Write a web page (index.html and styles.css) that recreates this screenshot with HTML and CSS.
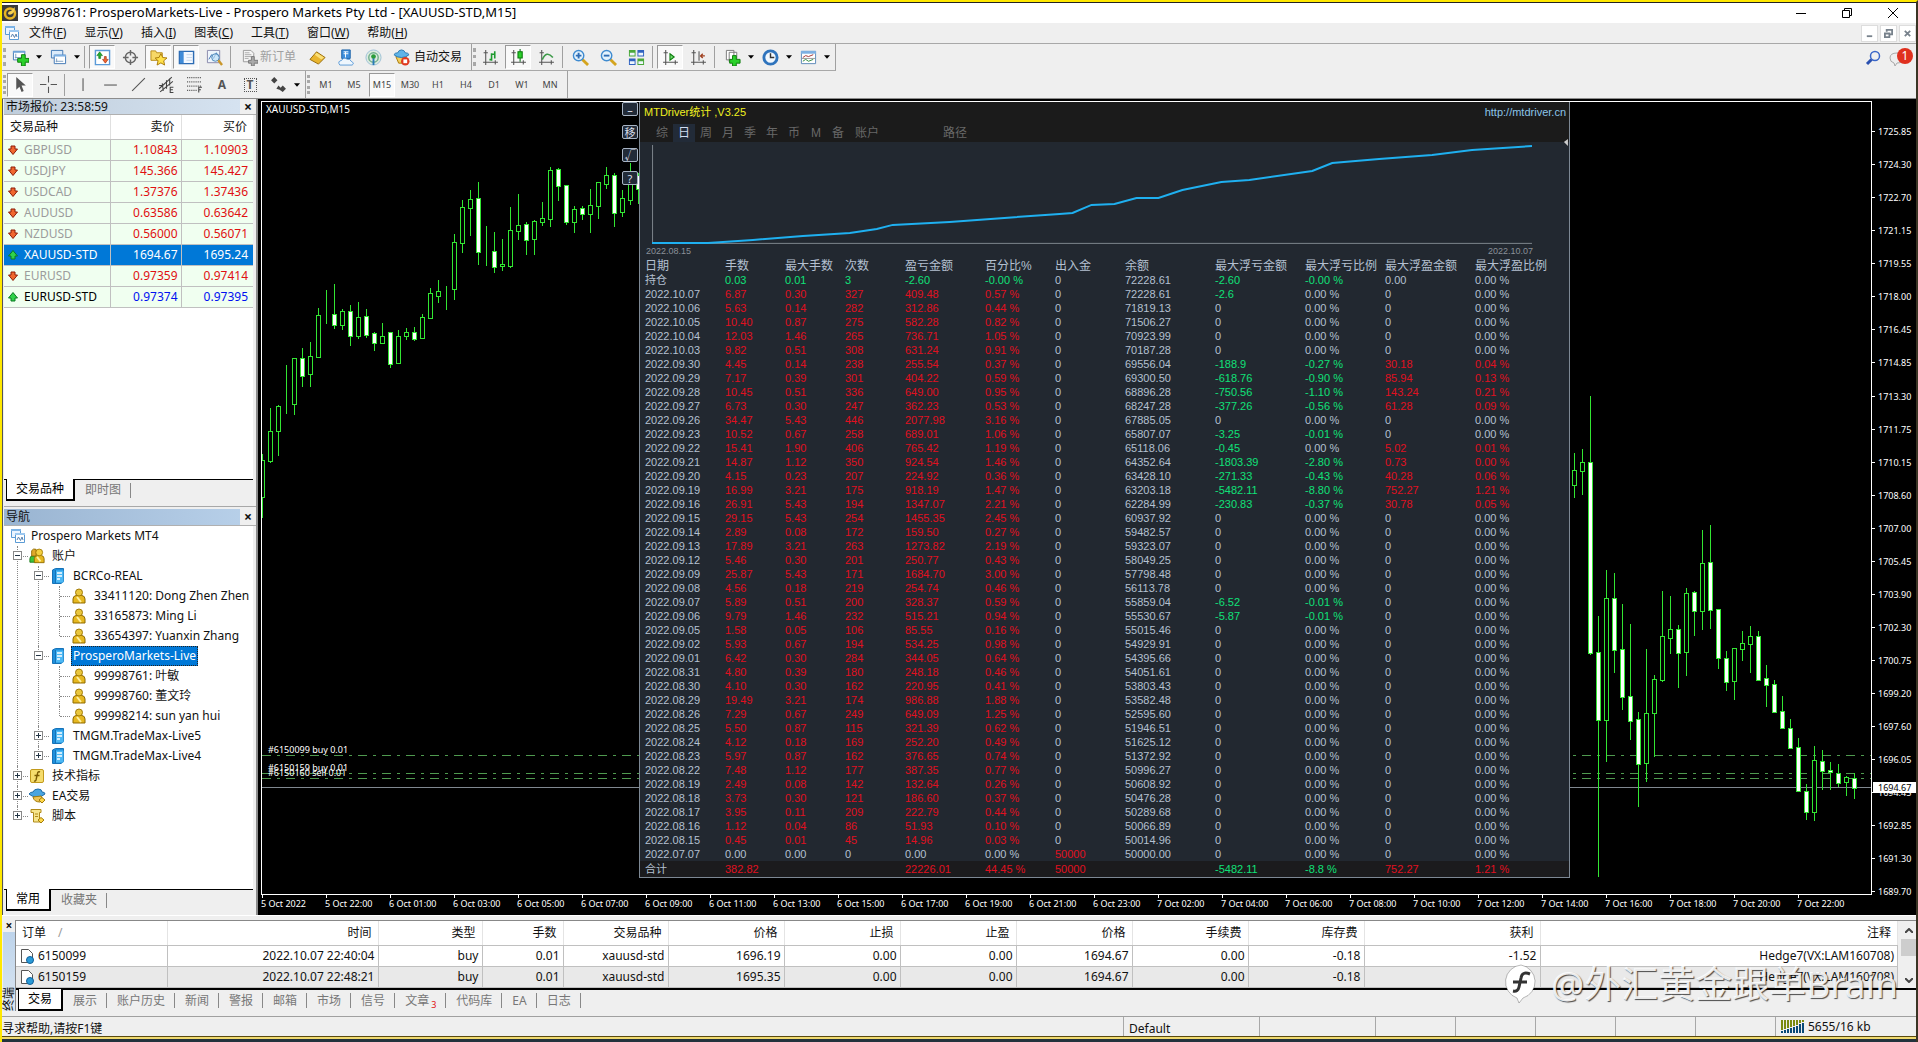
FILE: index.html
```html
<!DOCTYPE html>
<html lang="zh-CN">
  <head>
    <meta charset="UTF-8" />
    <meta name="viewport" content="width=device-width, initial-scale=1.0" />
    <title>99998761: ProsperoMarkets-Live</title>
    <link rel="stylesheet" href="styles.css" />
  </head>
  <body>
    <!-- shared icons -->
    <svg class="defs" width="0" height="0">
      <symbol id="i-down" viewBox="0 0 10 10"><path d="M3 1h4v3h2.500L5 9.500.5 4H3z" fill="#f0672f" stroke="#8d1c08" /></symbol>
      <symbol id="i-up" viewBox="0 0 10 10"><path d="M3 9h4V6h2.500L5 .5.5 6H3z" fill="#2fd24a" stroke="#0b7a22" /></symbol>
      <symbol id="i-win" viewBox="0 0 16 16">
        <path d="M1.500 1.500h9v8h-9z" fill="#eaf4ff" stroke="#5b9bd5" /><path d="M1 1h10v2H1z" fill="#7db4e6" />
        <path d="M5.500 5.500h9v9h-9z" fill="#fff" stroke="#5b9bd5" /><path d="M5 5h10v2H5z" fill="#9cc8f0" />
        <path d="M7 12l1.500-3 2 3.500L12 9l1 3" fill="none" stroke="#5b84b0" />
      </symbol>
      <symbol id="i-user" viewBox="0 0 16 16">
        <path d="M2 15V11q0-3 3-3.500h6q3 .5 3 3.500v4z" fill="#e6b820" stroke="#8f6a00" />
        <circle cx="8" cy="4.500" r="3.500" fill="#e9c63c" stroke="#a37c08" /><path d="M6 9l4 5" stroke="#fff0a0" stroke-width="2" />
      </symbol>
      <symbol id="i-users" viewBox="0 0 18 18">
        <path d="M1 16v-4q0-3 3-3h4v7z" fill="#3cc43c" stroke="#1c7a1c" />
        <path d="M3 3q2-3 5-1.500L8 9H3z" fill="#e0a92c" stroke="#8f6a00" />
        <path d="M6 16.500V12q0-3 3-3.500h5q3 .5 3 3.500v4.500z" fill="#e6b820" stroke="#8f6a00" />
        <circle cx="11.500" cy="5" r="3.800" fill="#f4d040" stroke="#a37c08" /><path d="M9 10l4 5" stroke="#fff0a0" stroke-width="2" />
      </symbol>
      <symbol id="i-server" viewBox="0 0 16 16">
        <path d="M2.500 2l3-1.500h8v13l-2.500 2h-8.500z" fill="#1f8fdc" stroke="#1673b8" /><path d="M5.500 2.500h8v12h-8z" fill="#4cb8f4" />
        <path d="M7 5h5M7 8h5M7 11h3" stroke="#fff" stroke-width="1.500" /><path d="M5.500 2v13" stroke="#1673b8" />
      </symbol>
      <symbol id="i-func" viewBox="0 0 16 16">
        <rect x="1.500" y="1.500" width="13" height="13" rx="1.500" fill="#f5dc6c" stroke="#c29a1c" />
        <path d="M11 4q-2-1-2.500 1.500L7 12q-.5 1.500-2 1M5.500 7.500h5" fill="none" stroke="#7a5a00" stroke-width="1.400" />
      </symbol>
      <symbol id="i-ea" viewBox="0 0 18 16">
        <path d="M1 6q1-2 4-2 1-3 5-3t4 3q3 0 3 2-3 3-8 3T1 6z" fill="#4aa5e0" stroke="#1f6ca8" />
        <path d="M5 9q1 5 7 5l3-2-2-4z" fill="#eec456" stroke="#a37c08" /><path d="M11 12l3-2.500 3 2.500-3 3z" fill="#ffd84a" stroke="#a37c08" />
      </symbol>
      <symbol id="i-script" viewBox="0 0 16 16">
        <path d="M2 1.500h10v3h-1.500V12H13v2H4.500V4.500H2z" fill="#f6e58c" stroke="#b08a1a" /><path d="M6 6h3M6 8.500h3" stroke="#b08a1a" />
        <path d="M9 12l3-2.500 3 2.500-3 3z" fill="#ffd84a" stroke="#a37c08" />
      </symbol>
      <symbol id="i-order" viewBox="0 0 16 16">
        <path d="M2.500 1.500h7l4 4v9h-11z" fill="#fff" stroke="#555" /><circle cx="11" cy="12" r="3.500" fill="#2a9ad6" stroke="#12609a" />
      </symbol>
      <symbol id="i-caret" viewBox="0 0 7 4"><path d="M0 0h7L3.500 4z" fill="#000" /></symbol>
      <symbol id="i-axes" viewBox="0 0 16 16"><path d="M3.500 1v14M1 12.500h14M1.500 3.500h4M12.500 10.500v4" fill="none" stroke="#555" /></symbol>
    </svg>

    <header class="titlebar">
      <svg class="logo" viewBox="0 0 16 16"><path d="M0 0h16v16H0z" fill="#3b3b3b" /><circle cx="8" cy="8.500" r="5" fill="none" stroke="#e8b523" stroke-width="2.500" /><path d="M6 9q0-3 3-3l4-4-1 5q-3 4-6 2z" fill="#f6d050" /></svg>
      <h1>99998761: ProsperoMarkets-Live - Prospero Markets Pty Ltd - [XAUUSD-STD,M15]</h1>
      <div class="win-btns">
        <button aria-label="最小化"><svg viewBox="0 0 10 10"><path d="M0 5.500h10" /></svg></button>
        <button aria-label="还原"><svg viewBox="0 0 10 10"><path d="M.5 2.500h7v7h-7zM2.500 2.500v-2h7v7h-2" /></svg></button>
        <button aria-label="关闭"><svg viewBox="0 0 10 10"><path d="M0 0l10 10M10 0L0 10" /></svg></button>
      </div>
    </header>

    <nav class="menubar">
      <svg class="ico"><use href="#i-win" /></svg>
      <button>文件(<u>F</u>)</button>
      <button>显示(<u>V</u>)</button>
      <button>插入(<u>I</u>)</button>
      <button>图表(<u>C</u>)</button>
      <button>工具(<u>T</u>)</button>
      <button>窗口(<u>W</u>)</button>
      <button>帮助(<u>H</u>)</button>
      <div class="mdi-btns">
        <button aria-label="最小化图表"><svg viewBox="0 0 10 10"><path d="M2 8h6" /></svg></button>
        <button aria-label="还原图表"><svg viewBox="0 0 10 10"><path d="M1 5h5v4H1zM3 3V1h6v5H7" /></svg></button>
        <button aria-label="关闭图表"><svg viewBox="0 0 10 10"><path d="M2 2l6 6M8 2L2 8" /></svg></button>
      </div>
    </nav>

    <div class="toolrow">
      <div class="toolbar">
        <button aria-label="新图表"><svg viewBox="0 0 18 18"><path d="M1.500 2.500h12v9h-12z" fill="#fff" stroke="#3f76b5" /><path d="M1 2h13v2H1z" fill="#6ea3d8" /><path d="M4 5v5M3 9h8" stroke="#7a9cc0" /><path d="M10 6h4v4h4v4h-4v4h-4v-4H6v-4h4z" fill="#2bd12b" stroke="#0c7a0c" /></svg></button>
        <button class="drop" aria-label="新图表列表"><svg><use href="#i-caret" /></svg></button>
        <button aria-label="模板"><svg viewBox="0 0 18 18"><path d="M1.500 1.500h12v8h-12z" fill="#dcebfa" stroke="#3f76b5" /><path d="M4.500 6.500h12v9h-12z" fill="#fff" stroke="#3f76b5" /><path d="M4 6h13v2H4z" fill="#7db0e2" /><path d="M7 10v4M6 13h8" stroke="#7a9cc0" /></svg></button>
        <button class="drop" aria-label="模板列表"><svg><use href="#i-caret" /></svg></button>
        <i class="sep"></i>
        <button class="on" aria-label="市场报价"><svg viewBox="0 0 18 18"><path d="M1.500 1.500h15v15h-15z" fill="#fff" stroke="#5a9ad8" stroke-width="1.500" /><path d="M6 3l3 4H7v3H5V7H3z" fill="#1fae2e" stroke="#0b6a18" stroke-width=".6" /><path d="M11 8h2v3h2l-3 4-3-4h2z" fill="#f0672f" stroke="#8d1c08" stroke-width=".6" /></svg></button>
        <button aria-label="数据窗口"><svg viewBox="0 0 18 18"><circle cx="9" cy="9" r="5.500" fill="none" stroke="#666" stroke-width="1.500" /><path d="M9 1v6M9 11v6M1 9h6M11 9h6" stroke="#666" stroke-width="1.500" /></svg></button>
        <button class="on" aria-label="导航"><svg viewBox="0 0 18 18"><path d="M1 2h5l1 2h6v8H1z" fill="#f7d868" stroke="#b88a16" /><path d="M11.500 5l2 4 4.500.5-3.500 3 1 4.500-4-2.300L7.500 17l1-4.500-3-3 4-.5z" fill="#ffe14a" stroke="#a87808" /></svg></button>
        <button class="on" aria-label="终端"><svg viewBox="0 0 18 18"><path d="M1.500 2.500h15v13h-15z" fill="#f3f8ff" stroke="#2d6cb4" stroke-width="1.500" /><path d="M2 3h4v12H2z" fill="#3f8bd8" /><path d="M9 6h6M9 9h6M9 12h6" stroke="#c8d8ea" /></svg></button>
        <button aria-label="策略测试"><svg viewBox="0 0 18 18"><path d="M1.500 1.500h13v13h-13z" fill="#eef5fc" stroke="#88a" /><path d="M3 11l3-5 2 4 3-6 2 4" fill="none" stroke="#3f76b5" /><circle cx="10" cy="9" r="4" fill="#bfe0f8aa" stroke="#4a86b8" /><path d="M13 12l4 5" stroke="#c9962a" stroke-width="2.500" /></svg></button>
        <i class="sep"></i>
        <button class="wide" disabled><svg viewBox="0 0 18 18"><path d="M2.500 1.500h8l3 3v9h-11z" fill="#f4f4f4" stroke="#999" /><path d="M4 4h5M4 6h7M4 8h7M4 10h4" stroke="#aaa" /><path d="M11 8h3v4h4v3h-4v3h-3v-3H8v-3h3z" fill="#aaa" stroke="#777" /></svg>新订单</button>
        <button aria-label="编辑器"><svg viewBox="0 0 18 18"><path d="M1 11L8 3l9 6-7 7z" fill="#e9b52e" stroke="#956a0a" /><path d="M8 4l8 5-3 2-7-5z" fill="#fbe078" /></svg></button>
        <button aria-label="市场"><svg viewBox="0 0 18 18"><path d="M5 1h9v9H5z" fill="#3f8fdc" stroke="#1c62a8" /><path d="M7 3h5M7 5h5M9 3v6" stroke="#fff" /><path d="M3 17q-3-4 2-5 2-4 6-1 3-1 4 2 4 2 1 4z" fill="#eef6fd" stroke="#5a9ad8" /></svg></button>
        <button aria-label="信号"><svg viewBox="0 0 18 18"><circle cx="9" cy="9" r="8" fill="#dceadf" stroke="#9cc0d8" /><circle cx="9" cy="9" r="5" fill="none" stroke="#6fae8a" stroke-width="1.500" /><circle cx="9" cy="8" r="2.500" fill="#2a9c3a" /><path d="M9 10v7" stroke="#2a7ab8" stroke-width="2" /></svg></button>
        <button class="wide auto"><svg viewBox="0 0 18 18"><path d="M3 8h11l-2 7H6z" fill="#f3cf5e" stroke="#a87808" /><path d="M1 6q1-2 4-2 1-3 4-3t4 3q3 0 4 2-3 3-8 3T1 6z" fill="#5fb4e8" stroke="#2a78b0" /><circle cx="13" cy="13" r="4.500" fill="#e03a20" /><path d="M11 11h4v4h-4z" fill="#fff" /></svg>自动交易</button>
      </div>
      <div class="toolbar">
        <button aria-label="柱状图"><svg viewBox="0 0 16 16"><use href="#i-axes" /><path d="M9 4v7M12 2v7M7 10h2M9 5h3" stroke="#1e9a2e" stroke-width="1.500" /></svg></button>
        <button class="on" aria-label="阴阳烛"><svg viewBox="0 0 16 16"><use href="#i-axes" /><path d="M9.500 0v12" stroke="#0b6a18" /><path d="M7.500 2.500h4v6h-4z" fill="#2bd12b" stroke="#0c7a0c" /></svg></button>
        <button aria-label="折线图"><svg viewBox="0 0 16 16"><use href="#i-axes" /><path d="M4 10q4-9 10-2" fill="none" stroke="#3c9a48" stroke-width="1.500" /></svg></button>
        <i class="sep"></i>
        <button aria-label="放大"><svg viewBox="0 0 18 18"><path d="M11 11l6 6" stroke="#d4a41e" stroke-width="3" /><circle cx="7" cy="7" r="5.500" fill="#e4f3fd" stroke="#3f8bd0" stroke-width="1.500" /><path d="M4 7h6M7 4v6" stroke="#2d6cb4" stroke-width="2" /></svg></button>
        <button aria-label="缩小"><svg viewBox="0 0 18 18"><path d="M11 11l6 6" stroke="#d4a41e" stroke-width="3" /><circle cx="7" cy="7" r="5.500" fill="#e4f3fd" stroke="#3f8bd0" stroke-width="1.500" /><path d="M4 7h6" stroke="#2d6cb4" stroke-width="2" /></svg></button>
        <button aria-label="平铺"><svg viewBox="0 0 18 18"><path d="M1 1h7v7H1zM10 10h7v7h-7z" fill="#4aa83a" /><path d="M10 1h7v7h-7zM1 10h7v7H1z" fill="#2f62c0" /><path d="M2 4h5v3H2zM11 4h5v3h-5zM2 13h5v3H2zM11 13h5v3h-5z" fill="#eef6fd" /></svg></button>
        <i class="sep"></i>
        <button class="on" aria-label="自动滚动"><svg viewBox="0 0 16 16"><use href="#i-axes" /><path d="M7.500 4.500l4 3-4 3z" fill="#6fdc6f" stroke="#0c7a0c" /></svg></button>
        <button aria-label="图表平移"><svg viewBox="0 0 16 16"><use href="#i-axes" /><path d="M8.500 2v9" stroke="#555" /><path d="M14 6.500H10M12 4.500l-2 2 2 2" fill="none" stroke="#a04020" stroke-width="1.300" /></svg></button>
        <i class="sep"></i>
        <button aria-label="指标"><svg viewBox="0 0 18 18"><path d="M5.500 3.500h8v10h-8zM2.500 1.500h8v10h-8z" fill="#fff" stroke="#777" /><path d="M9 7h4v4h4v4h-4v3H9v-3H6v-4h3z" fill="#2bd12b" stroke="#0c7a0c" /></svg></button>
        <button class="drop" aria-label="指标列表"><svg><use href="#i-caret" /></svg></button>
        <button aria-label="周期"><svg viewBox="0 0 18 18"><circle cx="9" cy="9" r="7" fill="#f2f8fe" stroke="#2f74bd" stroke-width="3" /><path d="M9 4.500V9h4" fill="none" stroke="#333" stroke-width="1.500" /></svg></button>
        <button class="drop" aria-label="周期列表"><svg><use href="#i-caret" /></svg></button>
        <button aria-label="图表模板"><svg viewBox="0 0 18 18"><path d="M1.500 2.500h15v13h-15z" fill="#fff" stroke="#5a88b8" /><path d="M1 2h16v3H1z" fill="#7db0e2" /><path d="M3 9l3-2 3 1 5-2" fill="none" stroke="#a03030" /><path d="M3 13l3-2 3 2 5-2" fill="none" stroke="#2f8a3c" /><path d="M2 10h14" stroke="#999" /></svg></button>
        <button class="drop" aria-label="模板选择"><svg><use href="#i-caret" /></svg></button>
      </div>
      <div class="alerts">
        <button aria-label="搜索"><svg viewBox="0 0 16 16"><circle cx="10" cy="6" r="4.500" fill="none" stroke="#3a66c8" stroke-width="1.500" /><path d="M6.500 9.500L2 14" stroke="#2a50b0" stroke-width="3" /></svg></button>
        <button class="chat" aria-label="消息"><svg viewBox="0 0 16 16"><path d="M1 8q0-5 7-5t7 5-7 5l-2 3-1-3Q1 12 1 8z" fill="#eee" stroke="#aaa" /></svg><b class="badge">1</b></button>
      </div>
    </div>

    <div class="toolrow">
      <div class="toolbar flat">
        <button class="on" aria-label="光标"><svg viewBox="0 0 16 16"><path d="M4 1v12l3-3 2 5 2-1-2-5h4z" fill="#555" /></svg></button>
        <button aria-label="十字准线"><svg viewBox="0 0 16 16"><path d="M8 0v6M8 10v6M0 8h6M10 8h6" stroke="#555" /></svg></button>
        <i class="sep"></i>
        <button aria-label="垂直线"><svg viewBox="0 0 16 16"><path d="M8.500 2v12" stroke="#555" /></svg></button>
        <button aria-label="水平线"><svg viewBox="0 0 16 16"><path d="M2 8.500h12" stroke="#555" /></svg></button>
        <button aria-label="趋势线"><svg viewBox="0 0 16 16"><path d="M2 14L14 2" stroke="#555" /></svg></button>
        <button aria-label="通道"><svg viewBox="0 0 16 16"><path d="M1 12L13 1M2 15L14 5M4 7l1 7M8 4l0 8M11 2l0 7M1 9h4" stroke="#444" fill="none" /><path d="M14.500 10.500h-3v5h3M12 13h2" stroke="#444" fill="none" /></svg></button>
        <button aria-label="斐波纳契"><svg viewBox="0 0 16 16"><path d="M1 1.500h14M1 5.500h14M1 9.500h14M1 13.500h9" stroke="#555" stroke-dasharray="1 1" /><path d="M15 10.500h-3v5M12 13h2" stroke="#444" fill="none" /></svg></button>
        <button class="letter">A</button>
        <button class="letter"><span>T</span></button>
        <button aria-label="箭头"><svg viewBox="0 0 16 16"><path d="M4 1l3 3-3 3-3-3zM3 6l3 1M8 9l2 2 2-2 3 3-3 3-3-2-3-1z" fill="#444" /></svg></button>
        <button class="drop" aria-label="箭头列表"><svg><use href="#i-caret" /></svg></button>
      </div>
      <div class="toolbar flat periods">
        <button>M1</button>
        <button>M5</button>
        <button class="on">M15</button>
        <button>M30</button>
        <button>H1</button>
        <button>H4</button>
        <button>D1</button>
        <button>W1</button>
        <button>MN</button>
      </div>
    </div>

    <main>
      <aside>
        <section class="dock watch">
          <h2 class="idle">市场报价: 23:58:59<button aria-label="关闭市场报价">×</button></h2>
          <div class="dock-body">
            <table class="quotes">
              <thead>
                <tr><th>交易品种</th><th>卖价</th><th>买价</th></tr>
              </thead>
              <tbody>
                <tr><td><svg><use href="#i-down" /></svg>GBPUSD</td><td>1.10843</td><td>1.10903</td></tr>
                <tr><td><svg><use href="#i-down" /></svg>USDJPY</td><td>145.366</td><td>145.427</td></tr>
                <tr><td><svg><use href="#i-down" /></svg>USDCAD</td><td>1.37376</td><td>1.37436</td></tr>
                <tr><td><svg><use href="#i-down" /></svg>AUDUSD</td><td>0.63586</td><td>0.63642</td></tr>
                <tr><td><svg><use href="#i-down" /></svg>NZDUSD</td><td>0.56000</td><td>0.56071</td></tr>
                <tr class="selected"><td><svg><use href="#i-up" /></svg>XAUUSD-STD</td><td>1694.67</td><td>1695.24</td></tr>
                <tr><td><svg><use href="#i-down" /></svg>EURUSD</td><td>0.97359</td><td>0.97414</td></tr>
                <tr class="active"><td><svg><use href="#i-up" /></svg>EURUSD-STD</td><td>0.97374</td><td>0.97395</td></tr>
              </tbody>
            </table>
          </div>
          <div class="tabs"><button class="on">交易品种</button><button>即时图</button></div>
        </section>

        <section class="dock navigator">
          <h2>导航<button aria-label="关闭导航">×</button></h2>
          <div class="dock-body">
            <div class="node root"><svg><use href="#i-win" /></svg><span>Prospero Markets MT4</span></div>
            <ul class="tree">
              <li>
                <div class="node"><button class="toggle open" aria-label="折叠"></button><svg><use href="#i-users" /></svg><span>账户</span></div>
                <ul>
                  <li>
                    <div class="node"><button class="toggle open" aria-label="折叠"></button><svg><use href="#i-server" /></svg><span>BCRCo-REAL</span></div>
                    <ul>
                      <li><div class="node leaf"><svg><use href="#i-user" /></svg><span>33411120: Dong Zhen Zhen</span></div></li>
                      <li><div class="node leaf"><svg><use href="#i-user" /></svg><span>33165873: Ming Li</span></div></li>
                      <li><div class="node leaf"><svg><use href="#i-user" /></svg><span>33654397: Yuanxin Zhang</span></div></li>
                    </ul>
                  </li>
                  <li>
                    <div class="node"><button class="toggle open" aria-label="折叠"></button><svg><use href="#i-server" /></svg><span class="picked">ProsperoMarkets-Live</span></div>
                    <ul>
                      <li><div class="node leaf"><svg><use href="#i-user" /></svg><span>99998761: 叶敏</span></div></li>
                      <li><div class="node leaf"><svg><use href="#i-user" /></svg><span>99998760: 董文玲</span></div></li>
                      <li><div class="node leaf"><svg><use href="#i-user" /></svg><span>99998214: sun yan hui</span></div></li>
                    </ul>
                  </li>
                  <li><div class="node"><button class="toggle" aria-label="展开"></button><svg><use href="#i-server" /></svg><span>TMGM.TradeMax-Live5</span></div></li>
                  <li><div class="node"><button class="toggle" aria-label="展开"></button><svg><use href="#i-server" /></svg><span>TMGM.TradeMax-Live4</span></div></li>
                </ul>
              </li>
              <li><div class="node"><button class="toggle" aria-label="展开"></button><svg><use href="#i-func" /></svg><span>技术指标</span></div></li>
              <li><div class="node"><button class="toggle" aria-label="展开"></button><svg><use href="#i-ea" /></svg><span>EA交易</span></div></li>
              <li><div class="node"><button class="toggle" aria-label="展开"></button><svg><use href="#i-script" /></svg><span>脚本</span></div></li>
            </ul>
          </div>
          <div class="tabs"><button class="on">常用</button><button>收藏夹</button></div>
        </section>
      </aside>

      <section class="chart">
        <div class="plot">
          <svg class="candles"></svg>
          <span class="symbol">XAUUSD-STD,M15</span>
          <span class="order o1">#6150099 buy 0.01</span>
          <span class="order o2">#6150159 buy 0.01</span>
          <span class="order o3">#6150160 sell 0.01</span>
          <div class="panel-btns">
            <button>–</button>
            <button>移</button>
            <button>√</button>
            <button>?</button>
          </div>
        </div>
        <div class="prices"></div>
        <div class="times"></div>

        <div class="stats">
          <div class="stats-head">
            <div class="stats-title"><h3>MTDriver统计 ,V3.25</h3><a href="#">http://mtdriver.cn</a></div>
            <div class="stats-tabs">
              <button>综</button><button class="on">日</button><button>周</button><button>月</button><button>季</button><button>年</button><button>币</button><button>M</button><button>备</button><button class="acc">账户</button><button class="path">路径</button>
            </div>
          </div>
          <div class="equity">
            <svg viewBox="0 0 930 103">
              <path d="M12.500 3v98M12 101.500h881" fill="none" stroke="#7d858c" />
              <polyline points="12,101 68,101 113,98 163,94 210,91 237,87 253,83 310,80 351,77 420,72 433,71 452,63 475,62 497,56 519,56 543,48 582,40 610,38 673,29 693,21 740,17 793,13 833,8 893,4" fill="none" stroke="#1fb0f0" stroke-width="2" />
              <path d="M929 -3v7l-4-4z" fill="#ccc" />
            </svg>
            <div class="range"><span>2022.08.15</span><span>2022.10.07</span></div>
          </div>
          <table class="daily">
            <thead>
              <tr><th>日期</th><th>手数</th><th>最大手数</th><th>次数</th><th>盈亏金额</th><th>百分比%</th><th>出入金</th><th>余额</th><th>最大浮亏金额</th><th>最大浮亏比例</th><th>最大浮盈金额</th><th>最大浮盈比例</th></tr>
            </thead>
            <tbody></tbody>
            <tfoot>
              <tr><th>合计</th><td class="red">382.82</td><td></td><td></td><td class="red">22226.01</td><td class="red">44.45 %</td><td class="red">50000</td><td></td><td class="green">-5482.11</td><td class="green">-8.8 %</td><td class="red">752.27</td><td class="red">1.21 %</td></tr>
            </tfoot>
          </table>
        </div>
      </section>
    </main>

    <section class="terminal">
      <div class="grab"><button aria-label="关闭终端">×</button><span>终端</span></div>
      <div class="terminal-body">
        <div class="orders-wrap">
          <table class="orders">
            <thead>
              <tr><th>订单<i>/</i></th><th>时间</th><th>类型</th><th>手数</th><th>交易品种</th><th>价格</th><th>止损</th><th>止盈</th><th>价格</th><th>手续费</th><th>库存费</th><th>获利</th><th>注释</th></tr>
            </thead>
            <tbody>
              <tr><td><svg><use href="#i-order" /></svg>6150099</td><td>2022.10.07 22:40:04</td><td>buy</td><td>0.01</td><td>xauusd-std</td><td>1696.19</td><td>0.00</td><td>0.00</td><td>1694.67</td><td>0.00</td><td>-0.18</td><td>-1.52</td><td>Hedge7(VX:LAM160708)</td></tr>
              <tr><td><svg><use href="#i-order" /></svg>6150159</td><td>2022.10.07 22:48:21</td><td>buy</td><td>0.01</td><td>xauusd-std</td><td>1695.35</td><td>0.00</td><td>0.00</td><td>1694.67</td><td>0.00</td><td>-0.18</td><td></td><td>Hedge7(VX:LAM160708)</td></tr>
            </tbody>
          </table>
          <div class="scroll">
            <svg viewBox="0 0 8 5"><path d="M0 5l4-4 4 4" /></svg>
            <div class="thumb"></div>
            <svg viewBox="0 0 8 5"><path d="M0 0l4 4 4-4" /></svg>
          </div>
        </div>
        <div class="tabs">
          <button class="on">交易</button><button>展示</button><button>账户历史</button><button>新闻</button><button>警报</button><button>邮箱</button><button>市场</button><button>信号</button><button>文章<sub>3</sub></button><button>代码库</button><button>EA</button><button>日志</button>
        </div>
      </div>
    </section>

    <footer>
      <span class="help">寻求帮助,请按F1键</span>
      <span class="profile">Default</span>
      <span class="info clock"></span><span class="info"></span><span class="info"></span><span class="info"></span><span class="info"></span><span class="info"></span>
      <span class="net"><svg viewBox="0 0 24 13"><path d="M1 0v10M4 0v9M7 0v8M10 0v7M13 0v6M16 0v5M19 0v3M22 0v2" stroke="#7a8a10" stroke-width="2" /><path d="M1 11v2M4 10v3M7 9v4M10 8v5M13 7v6M16 6v7M19 4v9M22 3v10" stroke="#0a4a78" stroke-width="2" /></svg>5655/16 kb</span>
    </footer>
    <div class="desk"></div>

    <div class="watermark">
      <svg viewBox="0 0 36 40"><path d="M18 1a17 17 0 0 1 2 33l-4 5-2-5A17 17 0 0 1 18 1z" fill="#fff" stroke="#0004" /><path d="M27 10q-8-3-9 4l-2 9q-1 5-6 4M10 18h14" fill="none" stroke="#333" stroke-width="3" /></svg>
      <span>@外汇黄金跟单Brain</span>
    </div>

    <script>
      // [bar index, direction, high, body top, body bottom, low]
      const bars = [
        [0, "u", 352, 358, 395, 415], [1, "u", 306, 329, 359, 360], [2, "u", 303, 304, 329, 353],
        [3, "u", 263, 304, 304, 311], [4, "u", 256, 256, 302, 312], [5, "d", 246, 256, 274, 284],
        [6, "u", 240, 254, 272, 284], [7, "u", 206, 213, 255, 255], [8, "u", 188, 213, 213, 221],
        [9, "d", 182, 212, 223, 226], [10, "u", 207, 209, 223, 227], [11, "d", 203, 209, 234, 243],
        [12, "u", 200, 215, 234, 236], [13, "d", 207, 214, 233, 235], [14, "d", 230, 231, 241, 248],
        [15, "u", 221, 234, 241, 241], [16, "d", 230, 230, 262, 265], [17, "u", 228, 234, 261, 261],
        [18, "u", 226, 230, 234, 237], [19, "d", 225, 230, 237, 238], [20, "u", 212, 215, 236, 236],
        [21, "u", 186, 191, 216, 216], [22, "u", 178, 189, 194, 200], [23, "u", 184, 188, 188, 207],
        [24, "u", 132, 140, 187, 197], [25, "u", 98, 105, 141, 150], [26, "u", 88, 97, 106, 133],
        [27, "d", 80, 96, 150, 162], [28, "u", 124, 149, 149, 163], [29, "d", 130, 149, 165, 170],
        [30, "u", 137, 162, 164, 168], [31, "u", 105, 128, 164, 165], [32, "u", 92, 123, 129, 137],
        [33, "d", 120, 122, 138, 152], [34, "u", 118, 119, 137, 152], [35, "u", 100, 116, 120, 123],
        [36, "u", 65, 68, 117, 124], [37, "d", 66, 67, 84, 98], [38, "d", 83, 83, 120, 122],
        [39, "u", 104, 107, 120, 130], [40, "d", 104, 106, 112, 117], [41, "u", 87, 103, 112, 130],
        [42, "u", 80, 80, 104, 116], [43, "u", 65, 73, 82, 86], [44, "d", 71, 73, 111, 124],
        [45, "u", 88, 96, 110, 114], [46, "u", 61, 78, 98, 102], [47, "d", 71, 73, 87, 101],
        [164, "u", 351, 368, 383, 395], [165, "u", 347, 360, 369, 392], [166, "d", 294, 360, 551, 552],
        [167, "d", 514, 550, 618, 774], [168, "u", 468, 496, 618, 659], [169, "d", 471, 496, 548, 570],
        [170, "d", 502, 547, 595, 607], [171, "d", 522, 594, 619, 637], [172, "d", 610, 617, 662, 704],
        [173, "u", 547, 611, 661, 679], [174, "u", 573, 577, 611, 654], [175, "u", 489, 534, 578, 579],
        [176, "u", 494, 527, 536, 551], [177, "d", 523, 527, 551, 585], [178, "u", 486, 491, 550, 573],
        [179, "d", 489, 490, 509, 533], [180, "u", 428, 461, 509, 527], [181, "d", 423, 460, 508, 526],
        [182, "d", 507, 507, 556, 566], [183, "d", 549, 556, 580, 588], [184, "u", 546, 546, 579, 597],
        [185, "u", 529, 541, 547, 558], [186, "u", 524, 534, 542, 570], [187, "d", 529, 534, 578, 578],
        [188, "d", 563, 576, 583, 604], [189, "d", 578, 582, 610, 610], [190, "d", 594, 609, 626, 626],
        [191, "d", 617, 626, 646, 646], [192, "d", 636, 645, 689, 689], [193, "d", 682, 689, 710, 717],
        [194, "u", 644, 658, 710, 718], [195, "d", 648, 659, 669, 687], [196, "d", 660, 668, 670, 687],
        [197, "d", 662, 671, 681, 684], [198, "u", 674, 675, 680, 693], [199, "d", 671, 676, 686, 696],
      ];

      let drawing = "";
      for (const y of [653, 671, 676]) {
        drawing += `<line class="level" x1="0" x2="100%" y1="${y}.5" y2="${y}.5" />`;
      }
      drawing += `<line class="bid" x1="0" x2="100%" y1="685.5" y2="685.5" />`;
      for (const [i, dir, high, top, bottom, low] of bars) {
        const x = i * 8;
        drawing += `<path class="${dir}" d="M${x + 0.5} ${high}V${low + 1}" />`;
        drawing += `<rect class="${dir}" x="${x - 1.5}" y="${top + 0.5}" width="4" height="${bottom - top}" />`;
      }
      document.querySelector(".candles").innerHTML = drawing;

      const prices = "1725.85 1724.30 1722.70 1721.15 1719.55 1718.00 1716.45 1714.85 1713.30 1711.75 1710.15 1708.60 1707.00 1705.45 1703.90 1702.30 1700.75 1699.20 1697.60 1696.05 1694.45 1692.85 1691.30 1689.70";
      document.querySelector(".prices").innerHTML =
        prices.split(" ").map((p) => `<span>${p}</span>`).join("") + `<b>1694.67</b>`;

      const times = ["5 Oct 2022", "5 Oct 22:00"];
      for (let h = 1; h < 24; h += 2) times.push(`6 Oct ${String(h).padStart(2, "0")}:00`);
      for (let h = 2; h < 24; h += 2) times.push(`7 Oct ${String(h).padStart(2, "0")}:00`);
      document.querySelector(".times").innerHTML = times.map((t) => `<span>${t}</span>`).join("");

      // date, lots, max lots, trades, profit, percent, deposit, balance, max loss, loss %, max gain, gain %
      const days = `持仓 0.03 0.01 3 -2.60 -0.00 0 72228.61 -2.60 -0.00 0.00 0.00
2022.10.07 6.87 0.30 327 409.48 0.57 0 72228.61 -2.6
2022.10.06 5.63 0.14 282 312.86 0.44 0 71819.13
2022.10.05 10.40 0.87 275 582.28 0.82 0 71506.27
2022.10.04 12.03 1.46 265 736.71 1.05 0 70923.99
2022.10.03 9.82 0.51 308 631.24 0.91 0 70187.28
2022.09.30 4.45 0.14 238 255.54 0.37 0 69556.04 -188.9 -0.27 30.18 0.04
2022.09.29 7.17 0.39 301 404.22 0.59 0 69300.50 -618.76 -0.90 85.94 0.13
2022.09.28 10.45 0.51 336 649.00 0.95 0 68896.28 -750.56 -1.10 143.24 0.21
2022.09.27 6.73 0.30 247 362.23 0.53 0 68247.28 -377.26 -0.56 61.28 0.09
2022.09.26 34.47 5.43 446 2077.98 3.16 0 67885.05
2022.09.23 10.52 0.67 258 689.01 1.06 0 65807.07 -3.25 -0.01
2022.09.22 15.41 1.90 406 765.42 1.19 0 65118.06 -0.45 0.00 5.02 0.01
2022.09.21 14.87 1.12 350 924.54 1.46 0 64352.64 -1803.39 -2.80 0.73 0.00
2022.09.20 4.15 0.23 207 224.92 0.36 0 63428.10 -271.33 -0.43 40.28 0.06
2022.09.19 16.99 3.21 175 918.19 1.47 0 63203.18 -5482.11 -8.80 752.27 1.21
2022.09.16 26.91 5.43 194 1347.07 2.21 0 62284.99 -230.83 -0.37 30.78 0.05
2022.09.15 29.15 5.43 254 1455.35 2.45 0 60937.92
2022.09.14 2.89 0.08 172 159.50 0.27 0 59482.57
2022.09.13 17.89 3.21 263 1273.82 2.19 0 59323.07
2022.09.12 5.46 0.30 201 250.77 0.43 0 58049.25
2022.09.09 25.87 5.43 171 1684.70 3.00 0 57798.48
2022.09.08 4.56 0.18 219 254.74 0.46 0 56113.78
2022.09.07 5.89 0.51 200 328.37 0.59 0 55859.04 -6.52 -0.01
2022.09.06 9.79 1.46 232 515.21 0.94 0 55530.67 -5.87 -0.01
2022.09.05 1.58 0.05 106 85.55 0.16 0 55015.46
2022.09.02 5.93 0.67 194 534.25 0.98 0 54929.91
2022.09.01 6.42 0.30 284 344.05 0.64 0 54395.66
2022.08.31 4.80 0.39 180 248.18 0.46 0 54051.61
2022.08.30 4.10 0.30 162 220.95 0.41 0 53803.43
2022.08.29 19.49 3.21 174 986.88 1.88 0 53582.48
2022.08.26 7.29 0.67 249 649.09 1.25 0 52595.60
2022.08.25 5.50 0.87 115 321.39 0.62 0 51946.51
2022.08.24 4.12 0.18 169 252.20 0.49 0 51625.12
2022.08.23 5.97 0.87 162 376.65 0.74 0 51372.92
2022.08.22 7.48 1.12 177 387.35 0.77 0 50996.27
2022.08.19 2.49 0.08 142 132.64 0.26 0 50608.92
2022.08.18 3.73 0.30 121 186.60 0.37 0 50476.28
2022.08.17 3.95 0.11 209 222.79 0.44 0 50289.68
2022.08.16 1.12 0.04 86 51.93 0.10 0 50066.89
2022.08.15 0.45 0.01 45 14.96 0.03 0 50014.96
2022.07.07 0.00 0.00 0 0.00 0.00 50000 50000.00`;

      const tone = (v) => (v.startsWith("-") ? "green" : Number(v) > 0 ? "red" : "");
      document.querySelector(".daily tbody").innerHTML = days
        .split("\n")
        .map((line) => {
          const v = line.split(" ");
          v[8] ??= "0";
          v[9] ??= "0.00";
          v[10] ??= "0";
          v[11] ??= "0.00";
          const p = tone(v[4]);
          const gain = tone(v[10]);
          const tones = [p, p, p, p, p, tone(v[6]), "", tone(v[8]), tone(v[9]), gain, gain];
          for (const i of [5, 9, 11]) v[i] += " %";
          return `<tr><th>${v[0]}</th>${v.slice(1).map((t, i) => `<td class="${tones[i]}">${t}</td>`).join("")}</tr>`;
        })
        .join("");
    </script>
  </body>
</html>
```
FILE: styles.css
```css
* {
  box-sizing: border-box;
}

body {
  margin: 0;
  height: 100vh;
  display: flex;
  flex-direction: column;
  overflow: hidden;
  background: #efefef;
  border-top: 2px solid #ffe800;
  border-left: 2px solid #ffe800;
  border-right: 2px solid #3a3424;
  color: #111;
  font-family: "Noto Sans", "Noto Sans CJK SC", sans-serif;
  font-size: 12px;
  line-height: 20px;
  white-space: nowrap;
}

button {
  margin: 0;
  padding: 0;
  border: 0;
  background: none;
  color: inherit;
  font: inherit;
}

h1,
h2,
h3 {
  margin: 0;
  font-size: 12px;
  font-weight: normal;
}

i {
  font-style: normal;
}

svg {
  display: block;
  flex: none;
}

table {
  border-collapse: collapse;
  table-layout: fixed;
}

th,
td {
  padding: 0;
  font-weight: normal;
  text-align: left;
}

.defs {
  position: absolute;
}

/* title and menu */
.titlebar {
  display: flex;
  align-items: center;
  height: 21px;
  border-top: 1px solid #222;
  background: #fff;
  flex: none;
}

.titlebar h1 {
  flex: 1;
  padding-left: 5px;
  color: #000;
  font-size: 13px;
  line-height: 18px;
  padding-bottom: 2px;
}

.logo {
  width: 16px;
  height: 16px;
}

.win-btns {
  display: flex;
}

.win-btns button {
  width: 46px;
  height: 18px;
  display: grid;
  place-items: center;
}

.win-btns svg {
  width: 10px;
  height: 10px;
  fill: none;
  stroke: #000;
}

.menubar {
  display: flex;
  align-items: center;
  height: 21px;
  flex: none;
  padding-left: 2px;
  border-bottom: 1px solid #a8a8a8;
}

.menubar > button {
  padding: 0 9px;
}

.ico {
  width: 16px;
  height: 16px;
}

.mdi-btns {
  display: flex;
  gap: 2px;
  margin-left: auto;
}

.mdi-btns button {
  width: 17px;
  height: 17px;
  border: 1px solid #ddd;
  background: #fff;
  display: grid;
  place-items: center;
}

.mdi-btns svg {
  width: 9px;
  height: 9px;
  fill: none;
  stroke: #78828c;
  stroke-width: 2;
}

/* toolbars */
.toolrow {
  display: flex;
  height: 27px;
  flex: none;
}

.toolbar {
  display: flex;
  align-items: center;
  padding-left: 4px;
  padding-right: 3px;
  border-right: 1px solid #a0a0a0;
  border-bottom: 1px solid #a8a8a8;
  position: relative;
}

.toolbar.flat {
  border-bottom: 0;
}

/* dotted grip at the left end of every bar */
.toolbar::before {
  content: "";
  position: absolute;
  left: 1px;
  top: 4px;
  bottom: 4px;
  border-left: 3px dotted #a8a8a8;
}

.toolbar button {
  width: 28px;
  height: 24px;
  display: flex;
  align-items: center;
  justify-content: center;
}

.toolbar button svg {
  width: 17px;
  height: 17px;
}

.toolbar .on {
  width: 26px;
  margin: 0 1px;
  background: #f9f9f9;
  border: 1px solid #fff;
  border-top-color: #999;
  border-left-color: #999;
}

.toolbar .drop {
  width: 10px;
}

.toolbar .drop svg {
  width: 6px;
  height: 4px;
}

.toolbar .wide {
  width: 69px;
  gap: 2px;
}

.toolbar .auto {
  width: 81px;
  gap: 4px;
}

.toolbar button:disabled {
  color: #a0a0a0;
}

.sep {
  width: 1px;
  height: 22px;
  margin: 0 3px 0 2px;
  background: #a0a0a0;
}

.letter {
  color: #555;
  font-weight: bold;
}

.letter span {
  width: 13px;
  line-height: 12px;
  border: 1px dotted #555;
}

.periods button {
  color: #444;
  font-size: 9px;
}

.toolbar.periods {
  padding-left: 6px;
}

.alerts {
  display: flex;
  gap: 8px;
  align-items: center;
  margin-left: auto;
  padding-right: 3px;
}

.alerts svg {
  width: 16px;
  height: 16px;
}

.chat {
  position: relative;
  width: 24px;
}

.badge {
  position: absolute;
  right: 0;
  top: -2px;
  width: 16px;
  border-radius: 8px;
  background: #e0301e;
  color: #fff;
  line-height: 16px;
  font-weight: normal;
}

/* main area */
main {
  flex: 1;
  min-height: 0;
  display: flex;
  border-top: 1px solid #8c8c8c;
}

aside {
  width: 256px;
  flex: none;
  display: flex;
  flex-direction: column;
  gap: 2px;
  padding-left: 1px;
  border-left: 1px solid #555;
  border-right: 2px solid #8c8c8c;
}

.dock {
  display: flex;
  flex-direction: column;
  padding-bottom: 4px;
}

.watch {
  flex: 1;
  padding-bottom: 5px;
  border-bottom: 1px solid #a8a8a8;
}

.navigator {
  flex: 1;
}

.dock h2 {
  display: flex;
  justify-content: space-between;
  height: 17px;
  line-height: 15px;
  padding-left: 2px;
  background: linear-gradient(90deg, #99b4d1, #b9d1ea);
  border-bottom: 1px solid #b0b0b0;
}

.dock h2.idle {
  height: 16px;
  background: linear-gradient(90deg, #bfcddb, #d7e4f2);
}

.dock h2 button {
  width: 16px;
  background: #efefef;
  font-size: 14px;
  font-weight: bold;
}

.dock-body {
  flex: 1;
  min-height: 0;
  margin-right: 3px;
  background: #fff;
  overflow: hidden;
}

.quotes {
  width: 100%;
}

.quotes th {
  height: 24px;
  padding: 0 6px;
  border-right: 1px solid #e0e0e0;
  border-bottom: 1px solid #c0c0c0;
}

.quotes th:first-child {
  width: 106px;
}

.quotes th:nth-child(2) {
  width: 71px;
}

.quotes th + th,
.quotes td + td {
  text-align: right;
}

.quotes td {
  height: 21px;
  padding: 0 3px;
  background: #f0fff0;
  border-right: 1px solid #c0c0c0;
  border-bottom: 1px solid #c0c0c0;
  color: #e01010;
}

.quotes th:last-child,
.quotes td:last-child {
  border-right: 0;
}

.quotes td:last-child {
  padding-right: 5px;
}

.quotes td:first-child {
  color: #9c9c9c;
}

.quotes td svg {
  display: inline-block;
  vertical-align: -1px;
  width: 10px;
  height: 10px;
  margin: 0 6px 0 1px;
}

.quotes .selected td {
  background: #0078d7;
  color: #fff;
}

.quotes .active td {
  color: #0010f0;
}

.quotes .active td:first-child {
  color: #000;
}

.tabs {
  display: flex;
  height: 22px;
  margin-right: 3px;
  padding-left: 2px;
  border-top: 1px solid #000;
  color: #777;
}

.tabs button {
  padding: 0 10px;
  line-height: 16px;
  position: relative;
}

.tabs button:not(.on)::after {
  content: "";
  position: absolute;
  right: 0;
  top: 3px;
  height: 15px;
  border-right: 1px solid #888;
}

.tabs .on {
  margin-top: -1px;
  padding: 0 9px;
  line-height: 18px;
  background: #fff;
  border: solid #000;
  border-width: 0 2px 2px 1px;
  color: #000;
}

.tabs sub {
  color: #e01010;
  font-size: 9px;
  line-height: 9px;
  vertical-align: -3px;
  padding-left: 2px;
}

/* navigator tree */
.tree,
.tree ul {
  list-style: none;
  margin: 0;
  padding: 0;
}

.tree {
  padding-left: 9px;
}

.tree ul {
  padding-left: 21px;
}

.tree li {
  position: relative;
}

.tree li::before {
  content: "";
  position: absolute;
  left: 4px;
  top: 0;
  bottom: 0;
  border-left: 1px dotted #888;
}

.tree li:last-child::before {
  bottom: auto;
  height: 10px;
}

.node {
  display: flex;
  align-items: center;
  height: 20px;
  position: relative;
}

.tree .node::before {
  content: "";
  position: absolute;
  left: 5px;
  width: 10px;
  top: 10px;
  border-top: 1px dotted #888;
}

.node svg {
  width: 18px;
  height: 16px;
}

.node span {
  margin-left: 4px;
  padding: 0 2px;
}

.root {
  padding-left: 5px;
}

.root span {
  margin-left: 2px;
}

.leaf {
  padding-left: 15px;
}

.toggle {
  position: relative;
  width: 9px;
  height: 9px;
  margin-right: 6px;
  border: 1px solid #888;
  background: #fff;
}

.toggle::before,
.toggle::after {
  content: "";
  position: absolute;
  left: 1px;
  top: 3px;
  width: 5px;
  height: 1px;
  background: #234;
}

.toggle::after {
  left: 3px;
  top: 1px;
  width: 1px;
  height: 5px;
}

.toggle.open::after {
  display: none;
}

.picked {
  background: #0078d7;
  outline: 1px dotted #222;
  outline-offset: -1px;
  color: #fff;
}

/* price chart */
.chart {
  position: relative;
  flex: 1;
  min-width: 0;
  display: grid;
  grid-template-columns: 1fr 44px;
  grid-template-rows: 1fr 20px;
  padding: 2px 0 0 3px;
  background: #000;
  color: #fff;
  font-size: 9px;
  line-height: 11px;
}

.plot {
  position: relative;
  border: 1px solid #fff;
  overflow: hidden;
}

.candles {
  width: 100%;
  height: 100%;
}

.candles path {
  stroke: #32e632;
}

.candles rect {
  fill: #000;
  stroke: #32e632;
}

.candles rect.d {
  fill: #fff;
}

.level {
  stroke: #4f9a4f;
  stroke-dasharray: 9 6 3 6;
}

.bid {
  stroke: #808890;
}

.symbol,
.order {
  position: absolute;
  left: 4px;
  top: 2px;
  font-size: 10px;
}

.order {
  left: 6px;
  font-size: 9px;
}

.o1 {
  top: 642px;
}

.o2 {
  top: 660px;
}

.o3 {
  top: 665px;
}

.panel-btns {
  position: absolute;
  left: 360px;
  top: 0;
  display: flex;
  flex-direction: column;
  gap: 9px;
}

.panel-btns button {
  width: 16px;
  height: 14px;
  border: 1px solid #a8b4c4;
  border-radius: 2px;
  background: #222b38;
  color: #d8dee8;
  font-size: 11px;
  line-height: 11px;
}

.prices {
  position: relative;
  display: flex;
  flex-direction: column;
  justify-content: space-between;
  padding-top: 25px;
  margin-bottom: -3px;
}

.prices span::before {
  content: "";
  display: inline-block;
  width: 3px;
  margin-right: 3px;
  vertical-align: 3px;
  border-top: 1px solid #fff;
}

.prices b {
  position: absolute;
  left: 1px;
  right: 0;
  top: 681px;
  padding-left: 5px;
  background: #fff;
  color: #000;
  font-weight: normal;
}

.times {
  grid-column: 1 / 3;
  display: flex;
}

.times span {
  width: 64px;
  flex: none;
  padding-top: 3px;
  position: relative;
}

.times span::before {
  content: "";
  position: absolute;
  left: 1px;
  top: 0;
  height: 3px;
  border-left: 1px solid #fff;
}

/* statistics panel over the chart */
.stats {
  position: absolute;
  left: 381px;
  top: 3px;
  width: 931px;
  border: 1px solid #7d8894;
  border-top: 0;
  background: #222830;
  color: #b4c0d0;
  font-family: "Liberation Sans", "Noto Sans CJK SC", sans-serif;
  font-size: 11px;
  line-height: 14px;
}

.stats-head {
  height: 40px;
  background: #1b1b1b;
}

.stats-title {
  display: flex;
  justify-content: space-between;
  padding: 1px 3px 0 4px;
  line-height: 18px;
}

.stats-title h3 {
  color: #f0f020;
  font-size: 11px;
}

.stats-title a {
  color: #8cc4e8;
  text-decoration: none;
}

.stats-tabs {
  display: flex;
  padding: 3px 0 0 11px;
  color: #686868;
  font-size: 12px;
}

.stats-tabs button {
  width: 22px;
  line-height: 18px;
}

.stats-tabs .on {
  background: #222b38;
  color: #d0dcf0;
}

.stats-tabs .acc {
  width: 36px;
}

.stats-tabs .path {
  margin-left: 50px;
  width: 40px;
}

.equity svg {
  width: 100%;
  overflow: visible;
}

.range {
  display: flex;
  justify-content: space-between;
  padding: 0 36px 0 6px;
  color: #8a9098;
  font-size: 9px;
  line-height: 12px;
  padding-bottom: 2px;
}

.daily {
  width: 100%;
}

.daily tr {
  height: 14px;
}

.daily th:first-child {
  width: 85px;
  padding-left: 5px;
}

.daily thead th {
  width: 90px;
  font-size: 12px;
}

.daily th:nth-child(2),
.daily th:nth-child(3),
.daily th:nth-child(4) {
  width: 60px;
}

.daily th:nth-child(5),
.daily th:nth-child(10) {
  width: 80px;
}

.daily th:nth-child(6),
.daily th:nth-child(7) {
  width: 70px;
}

.daily thead th:last-child {
  width: auto;
}

.daily tfoot {
  background: #1b1b1d;
  line-height: 16px;
}

.red {
  color: #e01020;
}

.green {
  color: #10e078;
}

/* terminal */
.terminal {
  flex: none;
  display: flex;
  padding: 4px 0 5px 1px;
  border-top: 1px solid #fff;
  border-bottom: 1px solid #a0a0a0;
}

.grab {
  width: 12px;
  display: flex;
  flex-direction: column;
  justify-content: space-between;
  align-items: center;
  background: linear-gradient(#b9d1ea, #dbe6f1);
}

.grab button {
  width: 100%;
  background: #efefef;
  line-height: 12px;
  font-weight: bold;
}

.grab span {
  writing-mode: vertical-rl;
  text-orientation: sideways;
  transform: rotate(180deg);
  line-height: 12px;
}

.terminal-body {
  flex: 1;
  min-width: 0;
  border-left: 1px solid #888;
  border-top: 1px solid #888;
}

.orders-wrap {
  display: flex;
}

.orders {
  flex: 1;
  width: 100%;
  background: #fff;
}

.orders th {
  height: 25px;
  width: 116px;
  padding: 0 6px;
  text-align: right;
  border-right: 1px solid #e4e4e4;
  border-bottom: 1px solid #c0c0c0;
}

.orders td {
  height: 21px;
  padding: 0 3px;
  text-align: right;
  border-right: 1px solid #c0c0c0;
  border-bottom: 1px solid #c0c0c0;
}

.orders th:first-child,
.orders td:first-child {
  text-align: left;
}

.orders th:first-child {
  width: 151px;
}

.orders th i {
  padding-left: 12px;
  color: #999;
}

.orders th:nth-child(2) {
  width: 211px;
}

.orders th:nth-child(3) {
  width: 104px;
}

.orders th:nth-child(4) {
  width: 81px;
}

.orders th:nth-child(5) {
  width: 105px;
}

.orders th:nth-child(12) {
  width: 176px;
}

.orders th:last-child {
  width: auto;
}

.orders td svg {
  display: inline-block;
  vertical-align: -4px;
  width: 16px;
  height: 16px;
  margin-right: 3px;
}

.orders tr:nth-child(2) td {
  background: #e9e9e9;
}

.scroll {
  width: 15px;
  margin-left: 3px;
  display: flex;
  flex-direction: column;
  align-items: center;
  padding: 7px 0 5px;
}

.scroll svg {
  width: 8px;
  height: 5px;
  fill: none;
  stroke: #444;
  stroke-width: 2;
}

.thumb {
  width: 15px;
  height: 17px;
  margin: 6px 0 auto;
  background: #cdcdcd;
}

.terminal .tabs {
  margin-right: 0;
  height: 23px;
  border-top-width: 2px;
}

/* status bar */
footer {
  display: flex;
  height: 20px;
  flex: none;
  line-height: 23px;
  border-bottom: 1px solid #5a4a10;
}

.help {
  flex: 1;
}

.profile,
.info,
.net {
  flex: none;
  width: 80px;
  padding-left: 5px;
  border-left: 1px solid #a8a8a8;
}

.profile {
  width: 136px;
}

.clock {
  width: 116px;
}

.net {
  display: flex;
  align-items: center;
  gap: 3px;
  width: 141px;
}

.net svg {
  width: 24px;
  height: 13px;
}

.desk {
  height: 5px;
  flex: none;
  border-top: 2px solid #f0da70;
  background: #22323c;
}

.watermark {
  position: absolute;
  right: 20px;
  bottom: 34px;
  display: flex;
  align-items: center;
  gap: 12px;
  color: #ffffffe0;
  font-size: 37px;
  line-height: 48px;
  text-shadow: 1px 1px 1px #000000b0;
}

.watermark svg {
  width: 36px;
  height: 40px;
}
```
